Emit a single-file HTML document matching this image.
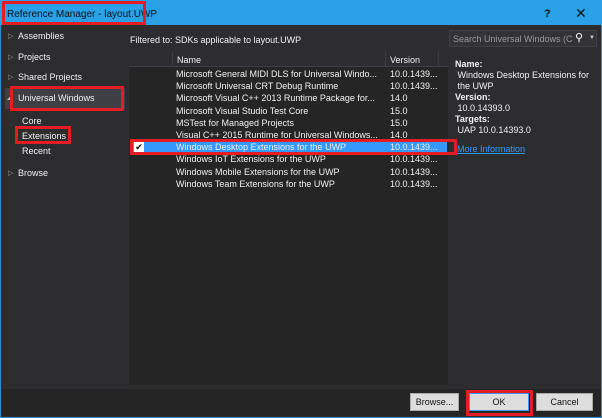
<!DOCTYPE html><html><head><style>
*{margin:0;padding:0;box-sizing:border-box}
body{width:602px;height:418px;background:#1e1e1e;font-family:"Liberation Sans",sans-serif;font-size:9px;color:#f1f1f1;position:relative;overflow:hidden}
.a{position:absolute;white-space:nowrap}
.red{position:absolute;border:3px solid #e51c23}
</style></head><body>
<div class="a" style="left:0;top:0;width:602px;height:418px;background:#2d2d30;border:1px solid #2e8fd0;border-top:none"></div>
<div class="a" style="left:0;top:0;width:602px;height:25px;background:#2aa0e6"></div>
<div class="a" style="left:7px;top:9px;color:#111;font-size:10px">Reference Manager - layout.UWP</div>
<div class="red" style="left:2px;top:1px;width:144px;height:24px"></div>
<div class="a" style="left:544px;top:8px;color:#111;font-size:11px;font-weight:bold">?</div>
<div class="a" style="left:575px;top:5px;color:#111;font-size:14px">✕</div>
<!-- left -->
<div class="a" style="left:5px;top:88px;width:120px;height:21px;background:#3f3f46"></div>
<div class="a" style="left:8px;top:32px;color:#999;font-size:7px">▷</div>
<div class="a" style="left:18px;top:31px">Assemblies</div>
<div class="a" style="left:8px;top:53px;color:#999;font-size:7px">▷</div>
<div class="a" style="left:18px;top:52px">Projects</div>
<div class="a" style="left:8px;top:73px;color:#999;font-size:7px">▷</div>
<div class="a" style="left:18px;top:72px">Shared Projects</div>
<div class="a" style="left:7px;top:93px;color:#ccc;font-size:7px">◢</div>
<div class="a" style="left:18px;top:93px">Universal Windows</div>
<div class="red" style="left:10px;top:86px;width:114px;height:25px"></div>
<div class="a" style="left:22px;top:116px">Core</div>
<div class="a" style="left:22px;top:131px">Extensions</div>
<div class="red" style="left:15px;top:126px;width:56px;height:18px"></div>
<div class="a" style="left:22px;top:146px">Recent</div>
<div class="a" style="left:8px;top:169px;color:#999;font-size:7px">▷</div>
<div class="a" style="left:18px;top:168px">Browse</div>
<!-- middle -->
<div class="a" style="left:130px;top:35px">Filtered to: SDKs applicable to layout.UWP</div>
<div class="a" style="left:129px;top:52px;width:319px;height:333px;background:#252526"></div>
<div class="a" style="left:129px;top:52px;width:319px;height:15px;background:#2d2d30;border-bottom:1px solid #3f3f46"></div>
<div class="a" style="left:172px;top:52px;width:1px;height:15px;background:#3f3f46"></div>
<div class="a" style="left:385px;top:52px;width:1px;height:15px;background:#3f3f46"></div>
<div class="a" style="left:438px;top:52px;width:1px;height:15px;background:#3f3f46"></div>
<div class="a" style="left:177px;top:55px">Name</div>
<div class="a" style="left:390px;top:55px">Version</div>
<div class="a" style="left:130px;top:141px;width:317px;height:12px;background:#3399ff"></div>
<div class="a" style="left:134px;top:142px;width:10px;height:10px;background:#fff;color:#000;font-size:9px;line-height:10px;text-align:center">✔</div>
<div class="red" style="left:130px;top:139px;width:327px;height:16px"></div>
<div class="a" style="left:176px;top:68px;line-height:12.2px">Microsoft General MIDI DLS for Universal Windo...<br>Microsoft Universal CRT Debug Runtime<br>Microsoft Visual C++ 2013 Runtime Package for...<br>Microsoft Visual Studio Test Core<br>MSTest for Managed Projects<br>Visual C++ 2015 Runtime for Universal Windows...<br>Windows Desktop Extensions for the UWP<br>Windows IoT Extensions for the UWP<br>Windows Mobile Extensions for the UWP<br>Windows Team Extensions for the UWP</div>
<div class="a" style="left:390px;top:68px;line-height:12.2px">10.0.1439...<br>10.0.1439...<br>14.0<br>15.0<br>15.0<br>14.0<br>10.0.1439...<br>10.0.1439...<br>10.0.1439...<br>10.0.1439...</div>
<!-- right -->
<div class="a" style="left:449px;top:30px;width:148px;height:17px;background:#333337;border:1px solid #3f3f46"></div>
<div class="a" style="left:453px;top:34px;color:#999">Search Universal Windows (C</div>
<div class="a" style="left:575px;top:31px;font-size:11px;color:#fff">⚲</div>
<div class="a" style="left:589px;top:35px;font-size:6px;color:#ccc">▼</div>
<div class="a" style="left:455px;top:59px;line-height:11px">
<b>Name:</b><br>&nbsp;Windows Desktop Extensions for<br>&nbsp;the UWP<br><b>Version:</b><br>&nbsp;10.0.14393.0<br><b>Targets:</b><br>&nbsp;UAP 10.0.14393.0</div>
<div class="a" style="left:457px;top:144px;color:#3399ff;text-decoration:underline">More Information</div>
<!-- bottom -->
<div class="a" style="left:1px;top:389px;width:600px;height:27px;background:#252526"></div>
<div class="a" style="left:410px;top:393px;width:49px;height:18px;background:#ddd;border:1px solid #aaa;color:#111;text-align:center;line-height:16px">Browse...</div>
<div class="a" style="left:469px;top:393px;width:60px;height:18px;background:#ddd;border:1px solid #3399ff;color:#111;text-align:center;line-height:16px">OK</div>
<div class="red" style="left:466px;top:390px;width:67px;height:26px"></div>
<div class="a" style="left:536px;top:393px;width:57px;height:18px;background:#ddd;border:1px solid #aaa;color:#111;text-align:center;line-height:16px">Cancel</div>
</body></html>
